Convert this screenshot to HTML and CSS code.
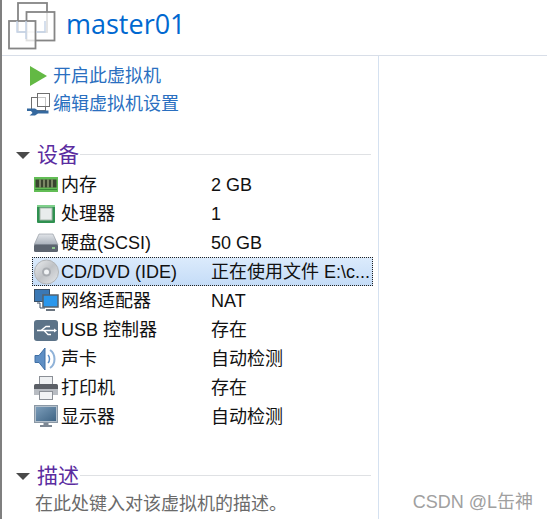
FILE: index.html
```html
<!DOCTYPE html>
<html lang="zh-CN">
<head>
<meta charset="utf-8">
<title>master01</title>
<link rel="stylesheet" href="styles.css">
</head>
<body>
<div class="page">
  <header class="head">
    <svg class="logo" width="56" height="52" viewBox="0 0 56 52" fill="none">
      <rect x="18" y="3" width="29" height="29" fill="#fff" stroke="#858585" stroke-width="1.8"/>
      <rect x="26.500" y="12" width="28" height="28.500" fill="#fff" fill-opacity=".75" stroke="#858585" stroke-width="1.8"/>
      <rect x="9" y="21" width="26.500" height="27.500" fill="#fff" fill-opacity=".75" stroke="#858585" stroke-width="1.8"/>
      <path d="M17 21v11h9M26 21v18M36 32h9V21" stroke="#c4d2e6" stroke-width="1.4"/>
    </svg>
    <h1 class="title">master01</h1>
  </header>
  <div class="main">
    <section class="panel">
      <div class="actions">
        <a class="action">
          <svg class="aicon" width="26" height="22" viewBox="0 0 26 22"><path d="M3 1l17 10L3 21z" fill="#63b944"/></svg>
          <span>开启此虚拟机</span>
        </a>
        <a class="action">
          <svg class="aicon" width="26" height="24" viewBox="0 0 26 24" fill="none">
            <rect x="4.500" y="5.500" width="14" height="13" fill="#fff" stroke="#6f6f6f"/>
            <rect x="10.500" y="1.500" width="12" height="13" fill="#fff" fill-opacity=".6" stroke="#6f6f6f"/>
            <path d="M0 16.500h8l3 2h10.500v3H11l-3 2H2.500l3-2.500-1.500-2H0z" fill="#35699f"/>
          </svg>
          <span>编辑虚拟机设置</span>
        </a>
      </div>

      <div class="group-head devices">
        <span class="caret"></span>
        <h2 class="group-title">设备</h2>
        <span class="rule"></span>
      </div>

      <ul class="list">
        <li class="row">
          <svg class="icon" width="25" height="18" viewBox="0 0 25 18">
            <rect y="1" width="24" height="15" fill="#62bd55"/>
            <rect x="1.500" y="3.500" width="21" height="8" fill="#39442f"/>
            <path d="M6 3.500v8M10 3.500v8M14 3.500v8M18 3.500v8" stroke="#97a37c" stroke-width="1.400"/>
            <path d="M1 13.500h22" stroke="#3b8a3a"/>
          </svg>
          <span class="name">内存</span><span class="val">2 GB</span>
        </li>
        <li class="row">
          <svg class="icon" width="25" height="20" viewBox="0 0 25 20">
            <rect x="3" y="1" width="18" height="18" rx="1" fill="#2f9150"/>
            <path d="M3 1h18v2H3z" fill="#7fd08b"/>
            <rect x="6" y="4" width="12" height="12" fill="#e8ecec" stroke="#a9b8ae"/>
          </svg>
          <span class="name">处理器</span><span class="val">1</span>
        </li>
        <li class="row">
          <svg class="icon" width="25" height="20" viewBox="0 0 25 20">
            <defs><linearGradient id="disk" x1="0" y1="0" x2="0" y2="1"><stop offset="0" stop-color="#e2e5e9"/><stop offset="1" stop-color="#a7afb9"/></linearGradient></defs>
            <path d="M5 1h14l5 11H0z" fill="url(#disk)" stroke="#8b929b" stroke-width=".6"/>
            <rect y="11.500" width="24" height="7.500" rx="1.500" fill="#5d6570"/>
            <rect x="18" y="14" width="3" height="2" fill="#8fc98f"/>
          </svg>
          <span class="name">硬盘(SCSI)</span><span class="val">50 GB</span>
        </li>
        <li class="row selected">
          <svg class="icon" width="25" height="26" viewBox="0 0 25 26">
            <defs><linearGradient id="cd" x1="0" y1="0" x2="1" y2="1"><stop offset="0" stop-color="#eceef0"/><stop offset=".5" stop-color="#bfc2c6"/><stop offset="1" stop-color="#e6e8ea"/></linearGradient></defs>
            <circle cx="12.500" cy="13" r="12" fill="url(#cd)" stroke="#b2b5b8"/>
            <circle cx="12.500" cy="13" r="4.500" fill="#a9adb2"/>
            <circle cx="12.500" cy="13" r="2.500" fill="#f2f4f6"/>
          </svg>
          <span class="name">CD/DVD (IDE)</span><span class="val">正在使用文件 E:\c...</span>
        </li>
        <li class="row">
          <svg class="icon" width="25" height="24" viewBox="0 0 25 24">
            <rect x=".5" y=".5" width="15" height="12" fill="#3b78b4" stroke="#3a4f66"/>
            <path d="M3 14h3v5h5" fill="none" stroke="#3a4f66"/>
            <rect x="9" y="6" width="15" height="12" fill="#2a97ec" stroke="#56616c" stroke-width="1.500"/>
            <path d="M12 21h9" stroke="#6b7580" stroke-width="2"/>
          </svg>
          <span class="name">网络适配器</span><span class="val">NAT</span>
        </li>
        <li class="row">
          <svg class="icon" width="25" height="24" viewBox="0 0 25 24">
            <rect x="0" y="2" width="24" height="21" rx="3" fill="#5c7388"/>
            <path d="M3 12.500h17M7 12.500l5-4h4M10 12.500l4 4h3" fill="none" stroke="#fff" stroke-width="1.300"/>
            <path d="M20 10.500l3 2-3 2z" fill="#fff"/>
          </svg>
          <span class="name">USB 控制器</span><span class="val">存在</span>
        </li>
        <li class="row">
          <svg class="icon" width="25" height="24" viewBox="0 0 25 24" fill="none">
            <path d="M1 8.500h4L11 1v22l-6-7.500H1z" fill="#5f8fc4" stroke="#3f6fa5"/>
            <path d="M14 8c2 2 2 6 0 8" stroke="#5b8dc5" stroke-width="1.500"/>
            <path d="M16 3c6 4 6 14 0 18" stroke="#8fb2d8" stroke-width="2"/>
          </svg>
          <span class="name">声卡</span><span class="val">自动检测</span>
        </li>
        <li class="row">
          <svg class="icon" width="25" height="24" viewBox="0 0 25 24">
            <rect x="5.500" y=".5" width="13" height="8" fill="#eef0f2" stroke="#8b8f96"/>
            <rect x="0" y="8" width="24" height="6" rx="1.500" fill="#5b5f66"/>
            <rect x="0" y="13" width="24" height="6" fill="#b8bcc2"/>
            <rect x="5.500" y="15.500" width="13" height="8" fill="#f2f3f5" stroke="#8b8f96"/>
          </svg>
          <span class="name">打印机</span><span class="val">存在</span>
        </li>
        <li class="row">
          <svg class="icon" width="25" height="24" viewBox="0 0 25 24">
            <defs><linearGradient id="scr" x1="0" y1="0" x2="1" y2="1"><stop offset="0" stop-color="#7b9cb9"/><stop offset="1" stop-color="#3f6484"/></linearGradient></defs>
            <rect x=".5" y=".5" width="23" height="17" fill="#b3c0cc" stroke="#8b98a5"/>
            <rect x="2" y="2" width="20" height="14" fill="url(#scr)"/>
            <path d="M9.500 18h5v2h-5zM6 20h12v2H6z" fill="#7d8894"/>
          </svg>
          <span class="name">显示器</span><span class="val">自动检测</span>
        </li>
      </ul>

      <div class="group-head describe">
        <span class="caret"></span>
        <h2 class="group-title">描述</h2>
        <span class="rule"></span>
      </div>
      <p class="desc">在此处键入对该虚拟机的描述。</p>
    </section>
    <aside class="side"><span class="mark">CSDN @L缶神</span></aside>
  </div>
</div>
</body>
</html>
```

FILE: styles.css
```css
* { box-sizing: border-box; }
html, body { margin: 0; padding: 0; }
body {
  width: 547px;
  height: 519px;
  overflow: hidden;
  background: #fff;
  font-family: "Liberation Sans", "Noto Sans CJK SC", sans-serif;
  color: #111;
}
.page {
  height: 519px;
  display: flex;
  flex-direction: column;
  border-left: 2px solid #7f7f7f;
}
.head {
  height: 56px;
  flex: none;
  display: flex;
  align-items: flex-start;
  border-bottom: 1px solid #d8dee8;
}
.logo { flex: none; margin-left: -2px; overflow: visible; }
.title {
  margin: 5px 0 0 10px;
  font-family: "Open Sans", "Liberation Sans", sans-serif;
  font-size: 27px;
  line-height: 38px;
  font-weight: 400;
  color: #0068d0;
}
.main { flex: 1; display: flex; min-height: 0; }
.panel {
  width: 377px;
  flex: none;
  border-right: 1px solid #d5e1f0;
  padding-left: 25px;
}
.actions { padding-top: 6px; display: flex; flex-direction: column; }
.action {
  height: 28px;
  display: flex;
  align-items: center;
  font-size: 18px;
  line-height: 24px;
  color: #2a6fc0;
}
.aicon { flex: none; }
.group-head { display: flex; align-items: center; margin-left: -11px; height: 24px; }
.devices { margin-top: 25px; }
.describe { margin-top: 33px; }
.caret {
  width: 0; height: 0;
  flex: none;
  border-left: 7px solid transparent;
  border-right: 7px solid transparent;
  border-top: 7px solid #4a4a4a;
}
.group-title {
  margin: 0 0 0 7px;
  font-size: 21px;
  font-weight: 400;
  color: #5a2ca0;
  line-height: 24px;
}
.rule { flex: none; width: 291px; height: 1px; background: #dfe1e4; margin: 0 0 2px 1px; }
.list { list-style: none; margin: 3px 0 0 5px; padding: 0; }
.row {
  height: 29px;
  width: 341px;
  display: flex;
  align-items: center;
  font-size: 18px;
  line-height: 24px;
  position: relative;
}
.icon { flex: none; margin-left: 2px; margin-right: 2px; }
.name { width: 150px; flex: none; white-space: nowrap; }
.val { white-space: nowrap; }
.selected {
  background: linear-gradient(#dcebfc, #c4dcf7);
  outline: 1px dotted #222;
  outline-offset: -1px;
}
.desc { margin: 4px 0 0 8px; font-size: 18px; line-height: 24px; color: #6a6a6a; }
.side { flex: 1; position: relative; }
.mark {
  position: absolute;
  right: 14px;
  bottom: 6px;
  font-size: 18px;
  color: #a0a0a0;
  white-space: nowrap;
}
```
